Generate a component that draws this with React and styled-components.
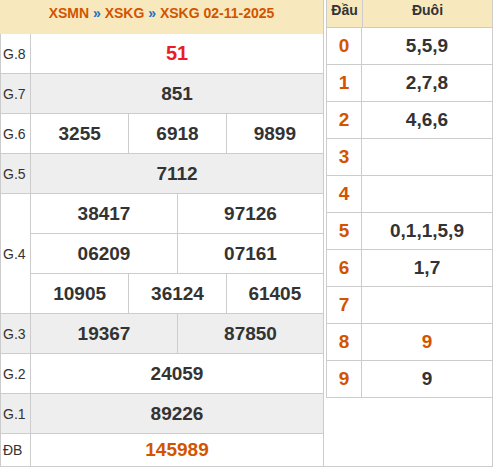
import React from 'react';
import styled, { createGlobalStyle } from 'styled-components';

const GlobalStyle = createGlobalStyle`
  body {
    margin: 0;
    font-family: 'Liberation Sans', Arial, sans-serif;
    background: #ffffff;
  }
`;

const prizes = [
  { label: 'G.8', rows: [['51']], special: 'red' },
  { label: 'G.7', rows: [['851']] },
  { label: 'G.6', rows: [['3255', '6918', '9899']] },
  { label: 'G.5', rows: [['7112']] },
  {
    label: 'G.4',
    rows: [
      ['38417', '97126'],
      ['06209', '07161'],
      ['10905', '36124', '61405'],
    ],
  },
  { label: 'G.3', rows: [['19367', '87850']] },
  { label: 'G.2', rows: [['24059']] },
  { label: 'G.1', rows: [['89226']] },
  { label: 'ĐB', rows: [['145989']], special: 'orange', short: true },
];

const loto = [
  { head: '0', tail: '5,5,9' },
  { head: '1', tail: '2,7,8' },
  { head: '2', tail: '4,6,6' },
  { head: '3', tail: '' },
  { head: '4', tail: '' },
  { head: '5', tail: '0,1,1,5,9' },
  { head: '6', tail: '1,7' },
  { head: '7', tail: '' },
  { head: '8', tail: '9', hot: true },
  { head: '9', tail: '9' },
];

export default function App() {
  return (
    <>
      <GlobalStyle />
      <Page>
        <ResultTable>
          <TableTitle>
            XSMN <Sep>»</Sep> XSKG <Sep>»</Sep> XSKG 02-11-2025
          </TableTitle>
          {prizes.map((p, i) => (
            <PrizeRow key={p.label} $shaded={i % 2 === 1}>
              <PrizeLabel>{p.label}</PrizeLabel>
              <PrizeBody>
                {p.rows.map((nums, j) => (
                  <NumberLine key={j} $cols={nums.length} $short={p.short}>
                    {nums.map((n) => (
                      <NumberCell key={n} $tone={p.special}>
                        {n}
                      </NumberCell>
                    ))}
                  </NumberLine>
                ))}
              </PrizeBody>
            </PrizeRow>
          ))}
        </ResultTable>
        <SideColumn>
          <LotoTable>
            <LotoHead>
              <HeadCell>Đầu</HeadCell>
              <HeadCell>Đuôi</HeadCell>
            </LotoHead>
            {loto.map((r) => (
              <LotoRow key={r.head}>
                <HeadDigit>{r.head}</HeadDigit>
                <TailDigits $hot={r.hot}>{r.tail}</TailDigits>
              </LotoRow>
            ))}
          </LotoTable>
        </SideColumn>
      </Page>
    </>
  );
}

const Page = styled.div`
  display: flex;
  width: 493px;
  height: 467px;
`;

const ResultTable = styled.div`
  width: 324px;
  display: flex;
  flex-direction: column;
`;

const TableTitle = styled.div`
  height: 34px;
  box-sizing: border-box;
  padding-top: 5px;
  background: #f7e8bd;
  color: #d35400;
  font-weight: bold;
  font-size: 14px;
  line-height: 17px;
  text-align: center;
  border-right: 1px solid #cccccc;
`;

const Sep = styled.span`
  color: #1f6fc1;
`;

const PrizeRow = styled.div`
  display: grid;
  grid-template-columns: 30px 1fr;
  background: ${(p) => (p.$shaded ? '#eeeeee' : '#ffffff')};
  border-left: 1px solid #cccccc;
  border-right: 1px solid #cccccc;
`;

const PrizeLabel = styled.div`
  display: flex;
  align-items: center;
  padding-left: 2px;
  font-size: 14px;
  color: #333333;
  border-right: 1px solid #cccccc;
  border-bottom: 1px solid #cccccc;
`;

const PrizeBody = styled.div`
  display: flex;
  flex-direction: column;
`;

const NumberLine = styled.div`
  display: grid;
  grid-template-columns: repeat(${(p) => p.$cols}, 1fr);
  height: ${(p) => (p.$short ? '33px' : '40px')};
  box-sizing: border-box;
  border-bottom: 1px solid #cccccc;
`;

const toneColor = {
  red: '#ec1c24',
  orange: '#d35400',
};

const NumberCell = styled.div`
  display: flex;
  align-items: center;
  justify-content: center;
  font-weight: bold;
  font-size: ${(p) => (p.$tone === 'red' ? '20px' : '19px')};
  color: ${(p) => toneColor[p.$tone] || '#333333'};
  & + & {
    border-left: 1px solid #cccccc;
  }
`;

const SideColumn = styled.div`
  flex: 1;
  box-sizing: border-box;
  padding-left: 2px;
  border-right: 1px solid #cccccc;
  border-bottom: 1px solid #cccccc;
`;

const LotoTable = styled.div`
  display: flex;
  flex-direction: column;
  border-left: 1px solid #cccccc;
`;

const LotoHead = styled.div`
  display: grid;
  grid-template-columns: 35px 1fr;
  height: 28px;
  box-sizing: border-box;
  background: #f7e8bd;
  border-bottom: 1px solid #cccccc;
`;

const HeadCell = styled.div`
  padding-top: 2px;
  text-align: center;
  font-weight: bold;
  font-size: 14px;
  line-height: 17px;
  color: #333333;
  & + & {
    border-left: 1px solid #cccccc;
  }
`;

const LotoRow = styled.div`
  display: grid;
  grid-template-columns: 35px 1fr;
  height: 37px;
  box-sizing: border-box;
  border-bottom: 1px solid #cccccc;
`;

const HeadDigit = styled.div`
  display: flex;
  align-items: center;
  justify-content: center;
  font-weight: bold;
  font-size: 19px;
  color: #d35400;
  border-right: 1px solid #cccccc;
`;

const TailDigits = styled.div`
  display: flex;
  align-items: center;
  justify-content: center;
  font-weight: bold;
  font-size: 19px;
  color: ${(p) => (p.$hot ? '#d35400' : '#333333')};
`;
